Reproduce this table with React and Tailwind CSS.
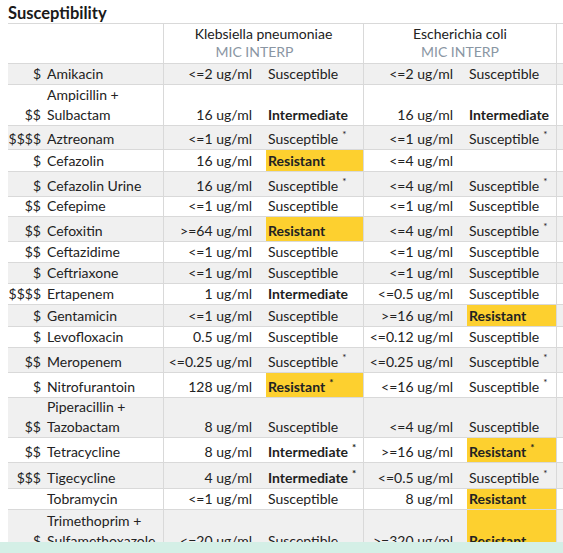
import React from 'react';

// Susceptibility panel: antibiotic list vs. two organisms (MIC + interpretation)
const S = 'Susceptible';
const I = 'Intermediate';
const R = 'Resistant';

const rows = [
  { cost: '$', name: ['Amikacin'], h: 'h-[21px]', k: ['<=2 ug/ml', S], e: ['<=2 ug/ml', S] },
  { cost: '$$', name: ['Ampicillin +', 'Sulbactam'], h: 'h-[41px]', k: ['16 ug/ml', I], e: ['16 ug/ml', I] },
  { cost: '$$$$', name: ['Aztreonam'], h: 'h-[24px]', k: ['<=1 ug/ml', S, true], e: ['<=1 ug/ml', S, true] },
  { cost: '$', name: ['Cefazolin'], h: 'h-[22px]', k: ['16 ug/ml', R], e: ['<=4 ug/ml', ''] },
  { cost: '$', name: ['Cefazolin Urine'], h: 'h-[25px]', k: ['16 ug/ml', S, true], e: ['<=4 ug/ml', S, true] },
  { cost: '$$', name: ['Cefepime'], h: 'h-[20px]', k: ['<=1 ug/ml', S], e: ['<=1 ug/ml', S] },
  { cost: '$$', name: ['Cefoxitin'], h: 'h-[25px]', k: ['>=64 ug/ml', R], e: ['<=4 ug/ml', S, true] },
  { cost: '$$', name: ['Ceftazidime'], h: 'h-[21px]', k: ['<=1 ug/ml', S], e: ['<=1 ug/ml', S] },
  { cost: '$', name: ['Ceftriaxone'], h: 'h-[21px]', k: ['<=1 ug/ml', S], e: ['<=1 ug/ml', S] },
  { cost: '$$$$', name: ['Ertapenem'], h: 'h-[21px]', k: ['1 ug/ml', I], e: ['<=0.5 ug/ml', S] },
  { cost: '$', name: ['Gentamicin'], h: 'h-[22px]', k: ['<=1 ug/ml', S], e: ['>=16 ug/ml', R] },
  { cost: '$', name: ['Levofloxacin'], h: 'h-[21px]', k: ['0.5 ug/ml', S], e: ['<=0.12 ug/ml', S] },
  { cost: '$$', name: ['Meropenem'], h: 'h-[25px]', k: ['<=0.25 ug/ml', S, true], e: ['<=0.25 ug/ml', S, true] },
  { cost: '$', name: ['Nitrofurantoin'], h: 'h-[25px]', k: ['128 ug/ml', R, true], e: ['<=16 ug/ml', S, true] },
  { cost: '$$', name: ['Piperacillin +', 'Tazobactam'], h: 'h-[40px]', k: ['8 ug/ml', S], e: ['<=4 ug/ml', S] },
  { cost: '$$', name: ['Tetracycline'], h: 'h-[25px]', k: ['8 ug/ml', I, true], e: ['>=16 ug/ml', R, true] },
  { cost: '$$$', name: ['Tigecycline'], h: 'h-[26px]', k: ['4 ug/ml', I, true], e: ['<=0.5 ug/ml', S, true] },
  { cost: '', name: ['Tobramycin'], h: 'h-[21px]', k: ['<=1 ug/ml', S], e: ['8 ug/ml', R] },
  { cost: '$', name: ['Trimethoprim +', 'Sulfamethoxazole'], h: 'h-[42px]', k: ['<=20 ug/ml', S], e: ['>=320 ug/ml', R] },
];

const Star = () => (
  <span className="relative -top-[6px] ml-[4px] text-[10px] leading-none">*</span>
);

const Interp = ({ value, star, width }) => {
  const resistant = value === R;
  const bold = value === R || value === I;
  return (
    <div
      className={`${width} flex items-end pl-[2px] ${resistant ? 'bg-[#fdd02f]' : ''} ${bold ? 'font-bold' : ''}`}
    >
      <span>
        {value}
        {star && value && <Star />}
      </span>
    </div>
  );
};

const Row = ({ row, shaded }) => (
  <div className={`flex ${row.h} border-b border-[#d9d9d9] ${shaded ? 'bg-[#f0f0f0]' : 'bg-white'}`}>
    <div className="w-[36px] shrink-0 flex items-end justify-end pr-[3px]">{row.cost}</div>
    <div className="w-[120px] shrink-0 flex flex-col justify-end pl-[3px] border-r border-[#d9d9d9]">
      {row.name.map((n) => (
        <span key={n} className="whitespace-nowrap">{n}</span>
      ))}
    </div>
    <div className="w-[102px] shrink-0 flex items-end justify-end pr-[14px]">{row.k[0]}</div>
    <div className="w-[98px] shrink-0 flex border-r border-[#d9d9d9]">
      <Interp value={row.k[1]} star={row.k[2]} width="w-[97px]" />
    </div>
    <div className="w-[103px] shrink-0 flex items-end justify-end pr-[14px]">{row.e[0]}</div>
    <div className="w-[90px] shrink-0 flex border-r border-[#d9d9d9]">
      <Interp value={row.e[1]} star={row.e[2]} width="w-[89px]" />
    </div>
    <div className="flex-1" />
  </div>
);

export default function App() {
  return (
    <div
      className="relative h-[553px] w-[563px] overflow-hidden bg-white text-[14px] leading-[20px] text-[#222222]"
      style={{ fontFamily: 'Lato, "Noto Sans", sans-serif' }}
    >
      <div className="h-[23px] pl-[8px] pt-[3px] text-[16.5px] font-bold leading-[20px] text-[#1a1a1a]">
        Susceptibility
      </div>
      <div className="ml-[8px] w-[600px]">
        <div className="flex h-[41px] border-y border-[#d9d9d9] bg-white leading-[18px]">
          <div className="w-[156px] shrink-0 border-r border-[#d9d9d9]" />
          <div className="w-[200px] shrink-0 flex flex-col items-center pt-[1px] border-r border-[#d9d9d9]">
            <span>Klebsiella pneumoniae</span>
            <span className="mr-[18px] text-[#8a96a3]">MIC INTERP</span>
          </div>
          <div className="w-[193px] shrink-0 flex flex-col items-center pt-[1px] border-r border-[#d9d9d9]">
            <span>Escherichia coli</span>
            <span className="text-[#8a96a3]">MIC INTERP</span>
          </div>
          <div className="flex-1" />
        </div>
        {rows.map((row, i) => (
          <Row key={row.name.join(' ')} row={row} shaded={i % 2 === 0} />
        ))}
      </div>
      <div className="absolute bottom-0 left-0 right-0 h-[11px] bg-[#d4efe6]" />
    </div>
  );
}
